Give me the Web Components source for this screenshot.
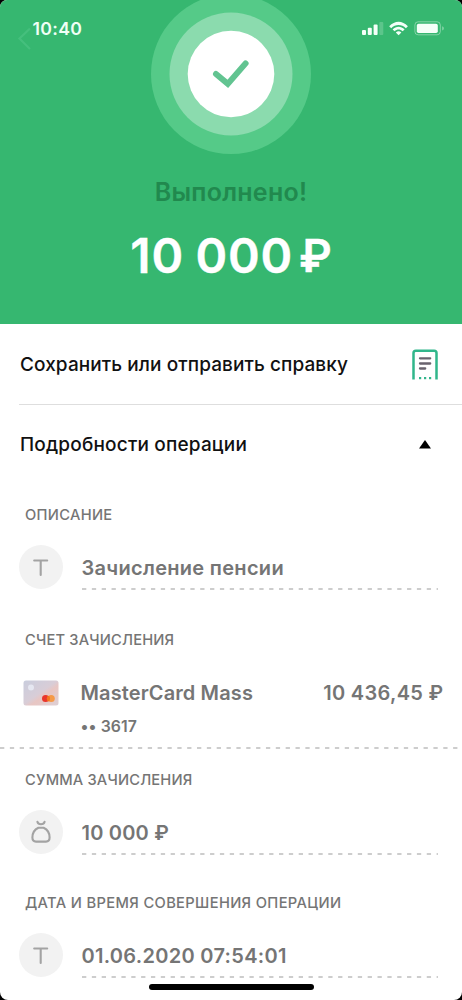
<!DOCTYPE html>
<html lang="ru">
<head>
<meta charset="utf-8">
<meta name="viewport" content="width=device-width, initial-scale=1">
<title>Выполнено</title>
<style>
html{background:#000}
body{margin:0;font-family:Inter,"Liberation Sans",sans-serif;color:#111}
</style>
</head>
<body>
<receipt-screen>
  <success-header slot="header" time="10:40" amount="10 000" currency="₽">Выполнено!</success-header>
  <menu-row style="--ls:.09px">Сохранить или отправить справку<receipt-icon slot="icon"></receipt-icon></menu-row>
  <menu-row last style="--ls:.18px">Подробности операции<arrow-icon slot="icon"></arrow-icon></menu-row>
  <detail-field label="Описание" style="--h:125px;--vls:.3px"><field-icon slot="icon" kind="text"></field-icon>Зачисление пенсии</detail-field>
  <account-field label="Счет зачисления" balance="10 436,45 ₽" number="•• 3617" style="--lls:.17px">MasterCard Mass</account-field>
  <detail-field label="Сумма зачисления" style="--h:123px;--lls:.17px;--vls:.2px"><field-icon slot="icon" kind="bag"></field-icon>10 000 ₽</detail-field>
  <detail-field label="Дата и время совершения операции" style="--h:123px;--lls:.35px;--vls:.3px"><field-icon slot="icon" kind="text"></field-icon>01.06.2020 07:54:01</detail-field>
</receipt-screen>
<script>
const define = (name, render) => customElements.define(name, class extends HTMLElement {
  constructor() { super(); this.attachShadow({ mode: 'open' }); }
  connectedCallback() { this.shadowRoot.innerHTML = render(this); }
});
const attr = (el, n) => el.getAttribute(n) || '';

define('receipt-screen', () => `
<style>
:host{display:flex;flex-direction:column;position:relative;width:462px;height:1000px;overflow:hidden;background:#fff;border-radius:7px 7px 8px 8px}
.home{position:absolute;left:149px;top:984px;width:165px;height:6px;border-radius:3px;background:#000}
</style>
<slot name="header"></slot><slot></slot><div class="home"></div>`);

define('status-icons', () => `
<style>:host{display:block;width:84px;height:16px}svg{display:block}</style>
<svg width="84" height="16" viewBox="361 20 84 16">
  <g fill="#f4fff8">
    <rect x="362" y="30" width="4" height="5" rx="1"/><rect x="367.8" y="27.7" width="4" height="7.3" rx="1"/><rect x="373.6" y="24.5" width="4" height="10.5" rx="1"/><rect x="379.3" y="22" width="4" height="13" rx="1" opacity=".2"/>
    <path d="M389.2 26.2C394.7 20.2 402.4 20.2 407.9 26.2L405.9 28.2C401.7 23.8 395.4 23.8 391.2 28.2Z"/>
    <path d="M392.6 29.4C396.2 25.8 401 25.8 404.6 29.4L402.6 31.3C400 28.9 397.1 28.9 394.6 31.3Z"/>
    <path d="M395.8 32.4Q398.6 30.2 401.4 32.4L398.6 35.2Z"/>
    <rect x="416.8" y="23.8" width="21" height="9.2" rx="1.8"/>
    <path d="M442.3 26.3c1.9.7 1.9 3.6 0 4.3z" opacity=".5"/>
  </g>
  <rect x="414.9" y="21.8" width="25.4" height="13" rx="3.2" fill="none" stroke="#f4fff8" stroke-opacity=".4"/>
</svg>`);

define('success-badge', () => `
<style>:host{display:block;width:160px;height:160px}svg{display:block}</style>
<svg width="160" height="160" viewBox="-80 -80 160 160">
  <circle r="80" fill="#55ca88"/><circle r="61.5" fill="#8bdbae"/><circle r="43.3" fill="#fff"/>
  <path d="M-15 0L-3.2 9.9L14.6 -10.6" fill="none" stroke="#62c491" stroke-width="6" stroke-linecap="round"/>
</svg>`);

define('success-header', el => `
<style>
:host{display:flex;flex-direction:column;align-items:center;position:relative;flex:none;height:324.4px;background:#36b770;overflow:hidden}
success-badge{margin-top:-5.7px}
.bar{position:absolute;left:0;right:0;top:0;display:flex;justify-content:space-between;padding:20px 17px 0 32.5px;align-items:flex-start}
.time{font-size:17.7px;line-height:18px;font-weight:600;color:#effff5;letter-spacing:.3px}
.back{position:absolute;left:16px;top:26px}
.title{margin-top:22.5px;font-size:25px;line-height:30px;font-weight:600;color:#21894e;white-space:nowrap;letter-spacing:.25px}
.sum{display:flex;margin-top:19.5px;line-height:60px;font-size:48px;font-weight:600;color:#fff;white-space:nowrap;gap:6px;-webkit-text-stroke:.4px #fff}
.value{letter-spacing:.8px;word-spacing:-1.2px}
.cur{font-size:45px}
</style>
<success-badge></success-badge>
<svg class="back" width="18" height="26" viewBox="0 0 18 26" fill="none" stroke="#45bf7d" stroke-width="2.2"><path d="M14 2.5L3.5 12.5L14 23"/></svg>
<div class="bar"><span class="time">${attr(el, 'time')}</span><status-icons></status-icons></div>
<div class="title"><slot></slot></div>
<div class="sum"><span class="value">${attr(el, 'amount')}</span><span class="cur">${attr(el, 'currency')}</span></div>`);

define('menu-row', el => `
<style>
:host{display:flex;flex:none;align-items:center;justify-content:space-between;box-sizing:border-box;height:80.3px;margin-left:19px;padding:1px 24px 0 1px;border-bottom:1px solid #dedede;font-size:19px;font-weight:500;letter-spacing:var(--ls)}
:host([last]){border-color:transparent}
span{white-space:nowrap}
</style><span><slot></slot></span><slot name="icon"></slot>`);

define('receipt-icon', () => `
<style>:host{display:block;width:26px;height:32px}svg{display:block}</style>
<svg width="26" height="32" viewBox="0 0 26 32"><path d="M1.5 30.5V4Q1.5 1.7 3.8 1.7H22.2Q24.5 1.7 24.5 4V30.5" fill="none" stroke="#31b68b" stroke-width="2.5"/>
<g stroke="#69636e" stroke-width="2.3" stroke-linecap="round"><path d="M8 9.3H18.2M8 14.5H18.2M8 19.5H13.2"/></g>
<g fill="#31b68b"><rect x="7" y="28" width="2.2" height="2.2"/><rect x="12" y="28" width="2.2" height="2.2"/><rect x="17" y="28" width="2.2" height="2.2"/></g></svg>`);

define('arrow-icon', () => `
<style>:host{display:block;width:26px;height:9px}svg{display:block}</style>
<svg width="26" height="9" viewBox="0 0 26 9"><path d="M13 0L19 8.5H7Z" fill="#000"/></svg>`);

define('field-icon', el => `
<style>:host{display:block;width:44px;height:44px;border-radius:50%;background:#f2f2f2}svg{display:block}</style>
<svg width="44" height="44" viewBox="-22 -22 44 44" fill="none" stroke="#a3a3a3" stroke-width="2.1" stroke-linecap="round" stroke-linejoin="round">
${attr(el, 'kind') === 'bag'
  ? '<path d="M-3.6 -10.3Q-3 -7.8 0 -7.8Q3 -7.8 3.6 -10.3M-2.6 -4.3H2.6C6.5 -2.5 8.6 1.5 8.6 5.5Q8.6 9.6 5 9.6H-5Q-8.6 9.6 -8.6 5.5C-8.6 1.5 -6.5 -2.5 -2.6 -4.3Z"/>'
  : '<path d="M-6.8 -6.5H6.2M-.3 -6.5V8"/>'}
</svg>`);

define('dashed-line', () => `
<style>:host{display:block;height:2px}svg{display:block;width:100%;height:2px}</style>
<svg><line x1="0" x2="100%" y1="1" y2="1" stroke="#bdbdbd" stroke-width="1.4" stroke-dasharray="4.3 5.55"/></svg>`);

const labelStyle = `.label{padding:20px 0 0 25px;font-size:14.7px;line-height:20px;font-weight:500;color:#757575;text-transform:uppercase;letter-spacing:var(--lls,.3px);white-space:nowrap}`;

define('detail-field', el => `
<style>
:host{display:block;flex:none;height:var(--h);color:#757575}
${labelStyle}
.row{display:grid;grid-template-columns:44px 1fr;column-gap:18.5px;padding:20.4px 24.2px 0 19px}
.value{display:flex;flex-direction:column;justify-content:space-between;height:44.6px}
.value span{padding-top:8.6px;font-size:20px;line-height:28px;font-weight:600;white-space:nowrap;letter-spacing:var(--vls)}
</style>
<div class="label">${attr(el, 'label')}</div>
<div class="row"><slot name="icon"></slot><div class="value"><span><slot></slot></span><dashed-line></dashed-line></div></div>`);

define('bank-card', () => `
<style>:host{display:block;width:36px;height:26px;margin-top:1px}svg{display:block}</style>
<svg width="36" height="26" viewBox="0 0 36 26"><defs><linearGradient id="g" x1="0" y1="0" x2="1" y2="1"><stop offset="0" stop-color="#c9cddd"/><stop offset=".48" stop-color="#d8cdd7"/><stop offset=".6" stop-color="#e8c6c3"/><stop offset="1" stop-color="#ddd0d5"/></linearGradient></defs>
<rect x=".5" y=".5" width="35" height="25" rx="2.5" fill="url(#g)"/><circle cx="8" cy="7.5" r="3" fill="#e5e7f1"/>
<circle cx="28.2" cy="18.5" r="3.6" fill="#f59a48"/><circle cx="22.6" cy="18.5" r="3.6" fill="#e9362c"/><ellipse cx="25.4" cy="18.5" rx="1.6" ry="2.8" fill="#f3761c"/></svg>`);

define('account-field', el => `
<style>
:host{display:block;flex:none;height:140px;color:#757575}
${labelStyle}
.row{display:grid;grid-template-columns:36px 1fr auto;column-gap:21.5px;align-items:start;padding:29.5px 18.5px 0 23px;height:67.7px}
.name,.bal{font-size:20px;line-height:28px;font-weight:600;white-space:nowrap;letter-spacing:.12px}
.bal{letter-spacing:.32px}
.num{font-size:15.8px;line-height:22px;font-weight:600;margin-top:8.3px;letter-spacing:.1px}
</style>
<div class="label">${attr(el, 'label')}</div>
<div class="row"><bank-card></bank-card><div><div class="name"><slot></slot></div><div class="num">${attr(el, 'number')}</div></div><div class="bal">${attr(el, 'balance')}</div></div>
<dashed-line></dashed-line>`);
</script>
</body>
</html>
